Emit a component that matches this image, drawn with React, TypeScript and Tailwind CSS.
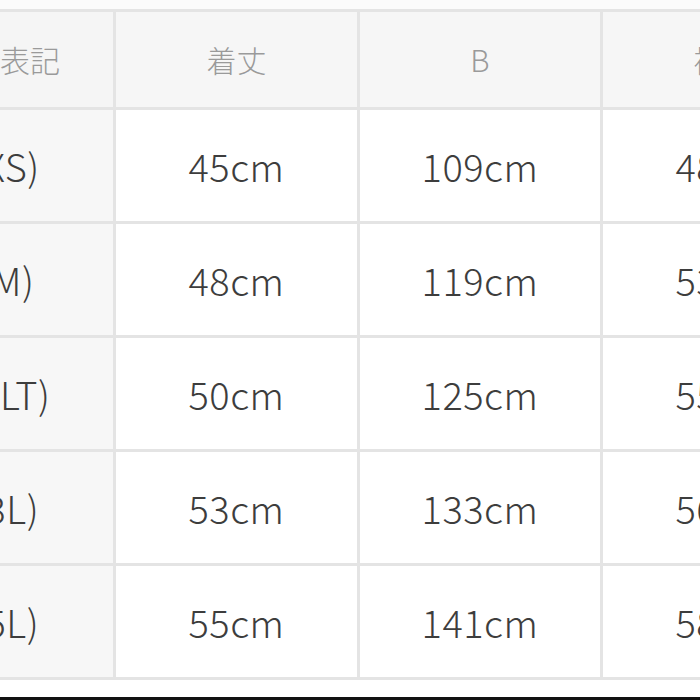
const header = ["サイズ表記", "着丈", "B", "裄丈", "肩幅"]

// the first column is cropped off on the left; pad so the visible tails sit where the photo has them
const rows = [
  { cells: ["S(XS)", "45cm", "109cm", "48cm", "40cm"], pad: "pl-[6px]" },
  { cells: ["M(M)", "48cm", "119cm", "53cm", "44cm"], pad: "" },
  { cells: ["2L(LT)", "50cm", "125cm", "55cm", "46cm"], pad: "pl-[14px]" },
  { cells: ["3L(3L)", "53cm", "133cm", "56cm", "48cm"], pad: "pr-[12px]" },
  { cells: ["5L(5L)", "55cm", "141cm", "58cm", "50cm"], pad: "pr-[12px]" },
]

export default function App() {
  return (
    <div
      className="w-[700px] h-[700px] overflow-hidden bg-[#fbfbfb] flex flex-col"
      style={{ fontFamily: '"Noto Sans CJK JP", "Noto Sans", sans-serif' }}
    >
      <div className="h-[9px] shrink-0" />
      <div className="ml-[-130px] w-[1230px] shrink-0 grid grid-cols-[243px_241px_240px_241px_241px] grid-rows-[95px_111px_111px_111px_111px_111px] gap-[3px] py-[3px] bg-[#e4e4e4]">
        {header.map((h, i) => (
          <div
            key={h}
            className={`flex items-center justify-center text-[30px] font-light text-[#9a9a9a] ${i === 0 ? "bg-[#f5f5f5] pr-[12px]" : "bg-[#f6f6f6]"}`}
          >
            {h}
          </div>
        ))}
        {rows.map((row) =>
          row.cells.map((cell, i) => (
            <div
              key={row.cells[0] + i}
              className={`flex items-center justify-center text-[38px] font-light tracking-[0.5px] text-[#3d3d3d] ${i === 0 ? `bg-[#f7f7f7] ${row.pad}` : "bg-white"}`}
            >
              {cell}
            </div>
          ))
        )}
      </div>
      <div className="flex-1 bg-white" />
      <div className="h-[3px] shrink-0 bg-[#111]" />
    </div>
  )
}
